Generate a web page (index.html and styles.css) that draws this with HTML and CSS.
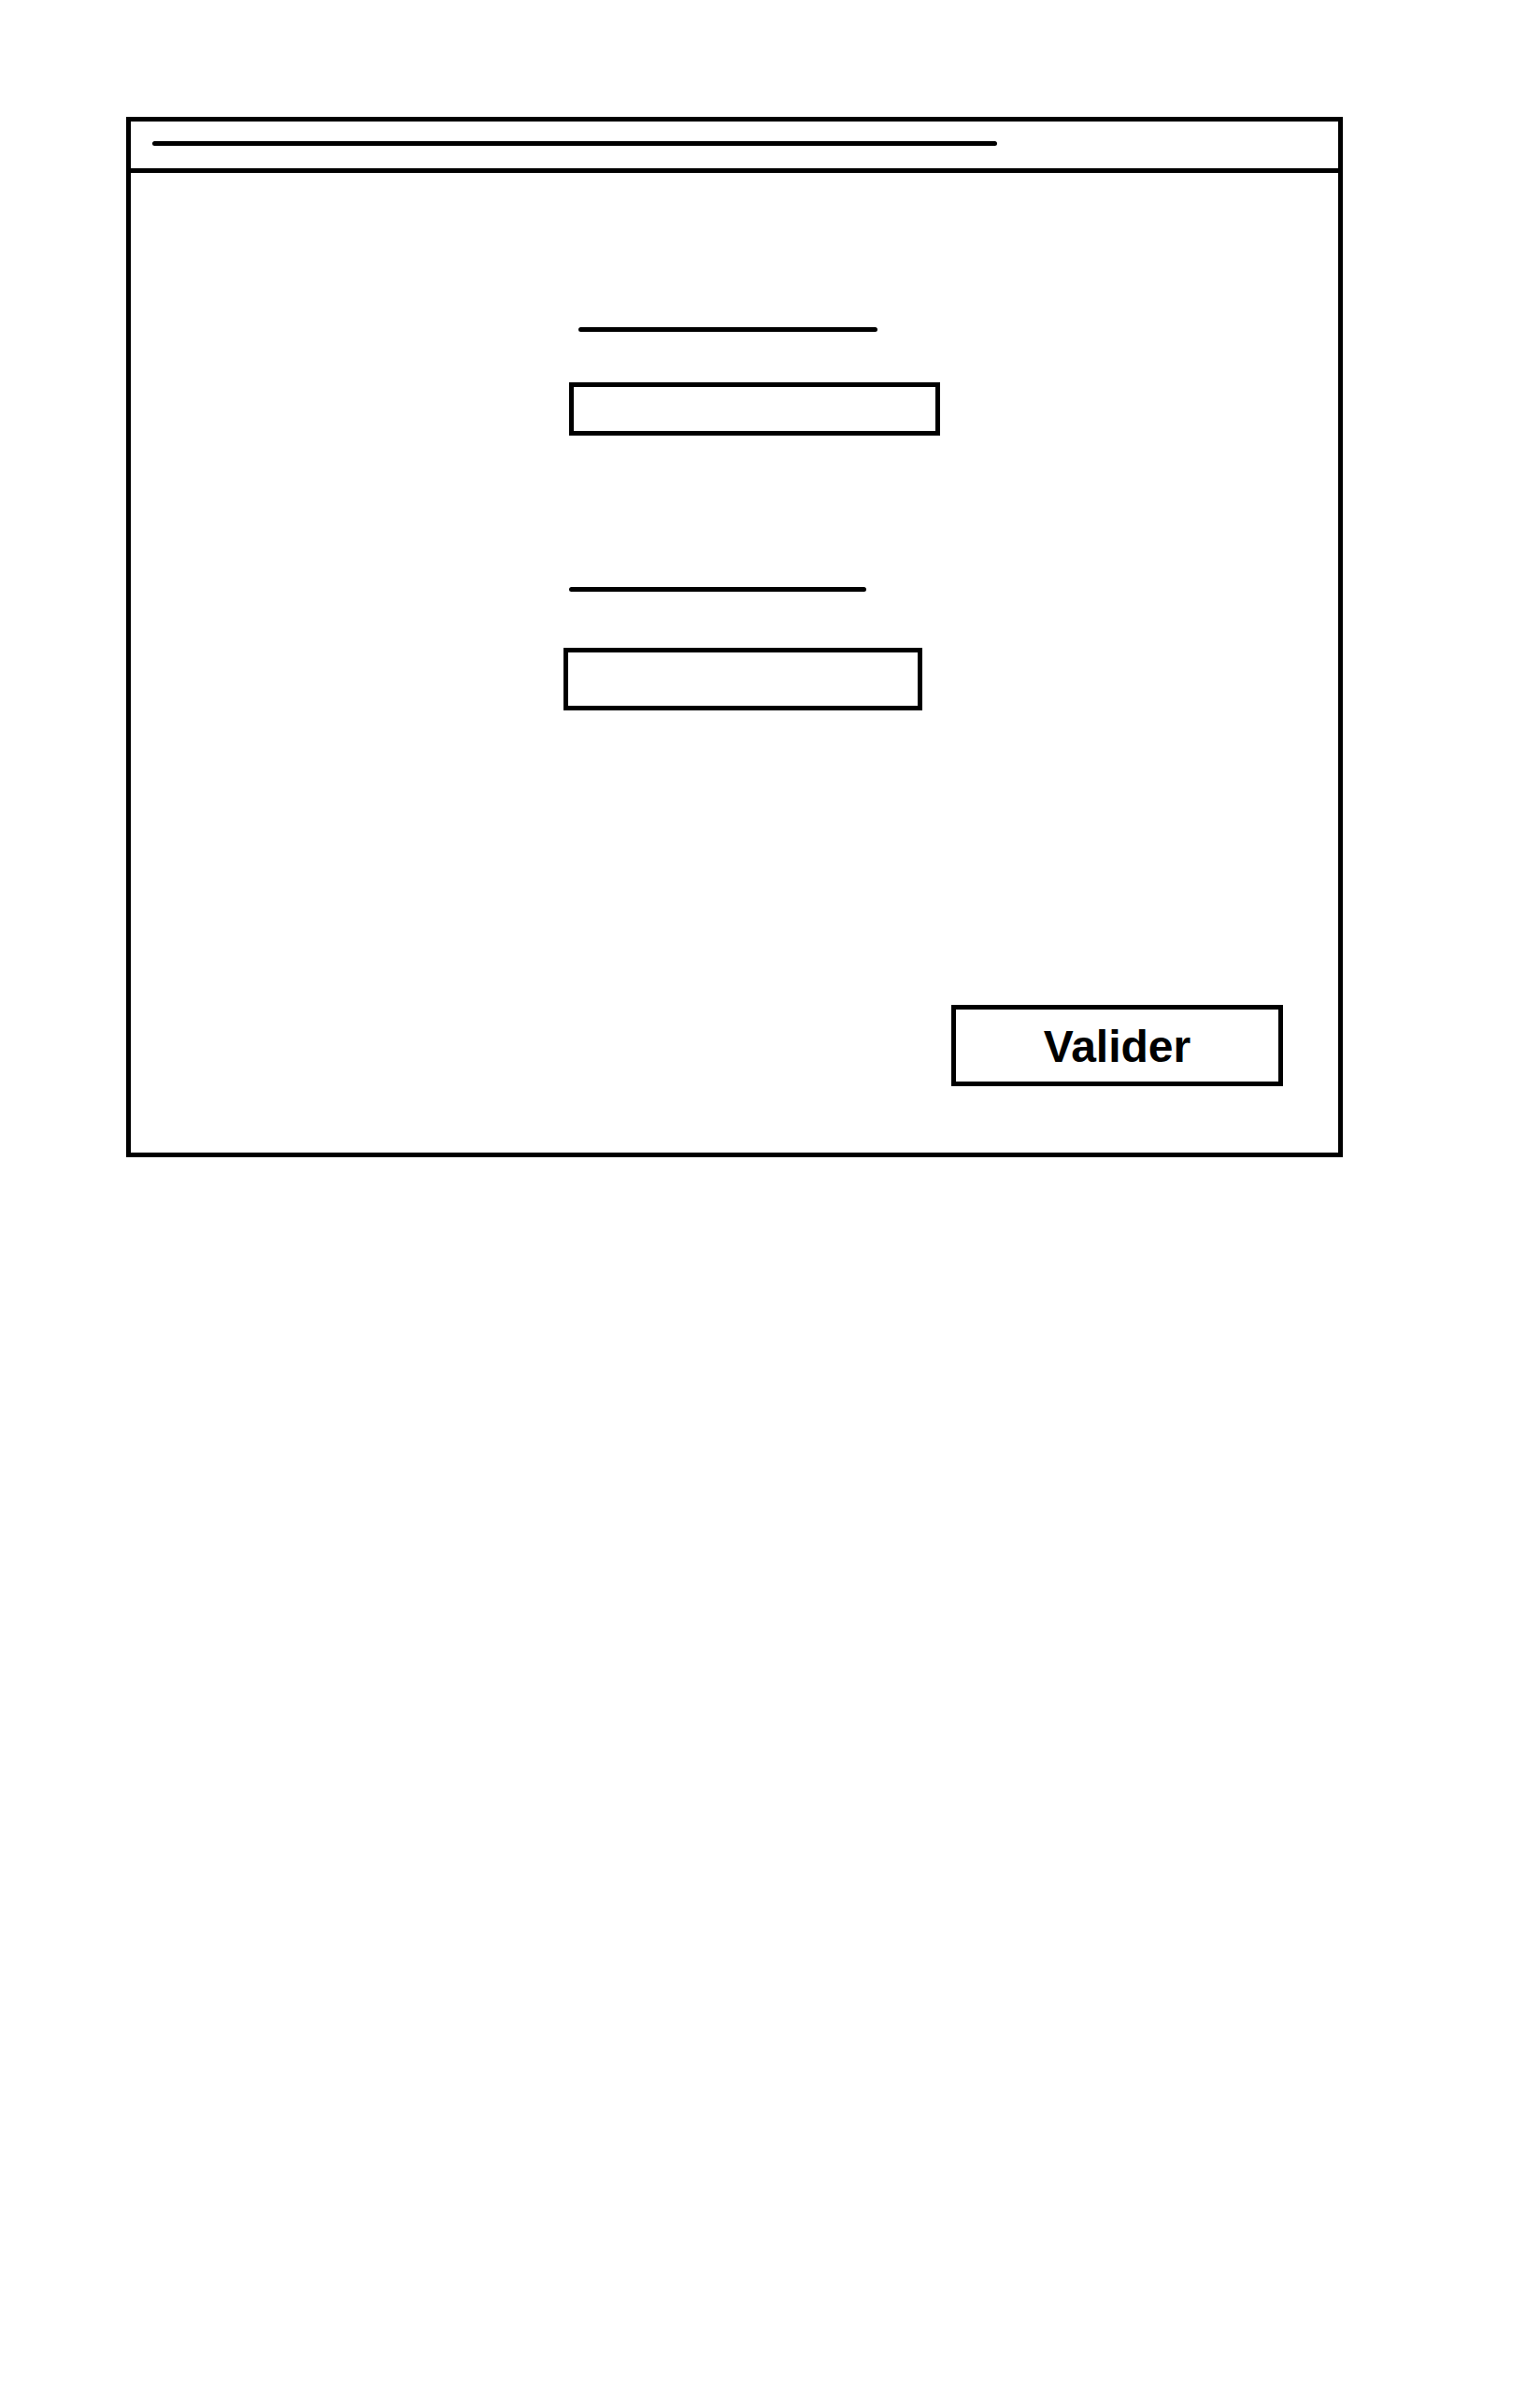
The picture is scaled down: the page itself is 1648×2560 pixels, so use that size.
FILE: index.html
```html
<!DOCTYPE html>
<html lang="fr">
<head>
<meta charset="utf-8">
<title>Formulaire</title>
<link rel="stylesheet" href="styles.css">
</head>
<body>
<div class="window">
  <div class="titlebar">
    <div class="title-line"></div>
  </div>
  <div class="content">
    <div class="label label-1"></div>
    <div class="field field-1"></div>
    <div class="label label-2"></div>
    <div class="field field-2"></div>
    <div class="button">Valider</div>
  </div>
</div>
</body>
</html>
```
FILE: styles.css
```css
html, body {
  margin: 0;
  padding: 0;
  background: #fff;
}
body {
  width: 1648px;
  height: 2560px;
}
.window {
  box-sizing: border-box;
  margin-left: 135px;
  margin-top: 125px;
  width: 1302px;
  height: 1113px;
  border: 5px solid #000;
  display: flex;
  flex-direction: column;
}
.titlebar {
  box-sizing: border-box;
  height: 55px;
  border-bottom: 5px solid #000;
  padding-top: 21px;
  padding-left: 23px;
}
.title-line {
  width: 904px;
  height: 5px;
  background: #000;
  border-radius: 3px;
}
.content {
  flex: 1;
  display: flex;
  flex-direction: column;
  align-items: flex-start;
  padding-top: 165px;
}
.label {
  height: 5px;
  background: #000;
  border-radius: 3px;
}
.label-1 {
  margin-left: 479px;
  width: 320px;
}
.field {
  box-sizing: border-box;
  border: 5px solid #000;
  background: #fff;
}
.field-1 {
  margin-top: 54px;
  margin-left: 469px;
  width: 397px;
  height: 57px;
}
.label-2 {
  margin-top: 162px;
  margin-left: 469px;
  width: 318px;
}
.field-2 {
  margin-top: 60px;
  margin-left: 463px;
  width: 384px;
  height: 67px;
}
.button {
  box-sizing: border-box;
  margin-top: auto;
  margin-bottom: 71px;
  margin-right: 59px;
  align-self: flex-end;
  width: 355px;
  height: 87px;
  border: 5px solid #000;
  display: flex;
  align-items: center;
  justify-content: center;
  font-family: "Liberation Sans", Arial, sans-serif;
  font-weight: bold;
  font-size: 48px;
  color: #000;
  padding-top: 2px;
}
```
